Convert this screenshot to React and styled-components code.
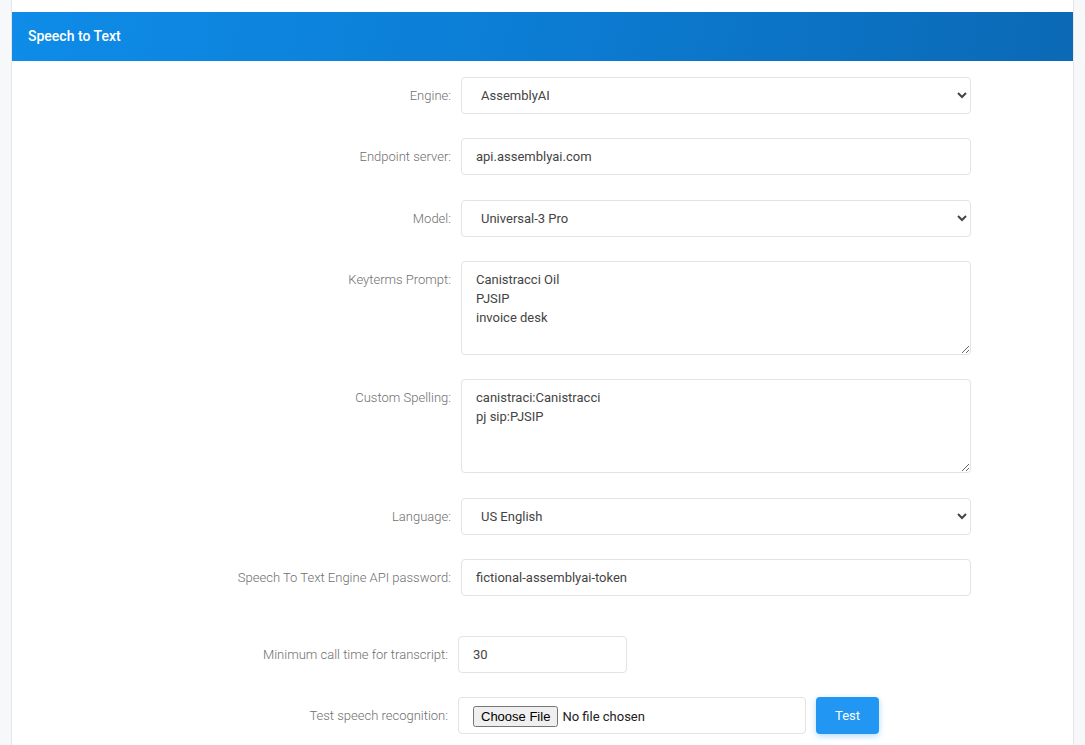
import React from "react";
import styled, { createGlobalStyle } from "styled-components";

const Global = createGlobalStyle`
  html, body { margin: 0; padding: 0; background: #f7f8fa; }
  body { font-family: Roboto, "Noto Sans", Arial, sans-serif; }
  * { box-sizing: border-box; }
`;

const Page = styled.div`
  padding: 0 11px 0 11px;
  min-height: 745px;
`;

const Card = styled.div`
  background: #fff;
  border-left: 1px solid #e6e7ea;
  border-right: 1px solid #e6e7ea;
  padding-top: 12px;
  min-height: 745px;
`;

const Header = styled.div`
  height: 49px;
  display: flex;
  align-items: center;
  padding: 0 16px 1px;
  background: linear-gradient(100deg, #0e8ce8 0%, #0c7ed6 45%, #0b69b5 100%);
  color: #fff;
  font-size: 14px;
  font-weight: 500;
`;

const Body = styled.div`
  padding-top: 16px;
  display: flex;
  flex-direction: column;
  gap: 24.33px;
`;

const Row = styled.div`
  display: flex;
  align-items: flex-start;
  gap: 10px;
  margin-top: ${(p) => (p.$extra ? "15.33px" : "0")};
`;

const Label = styled.label`
  width: ${(p) => p.$w || 439}px;
  flex: none;
  text-align: right;
  padding-top: 9px;
  line-height: 19px;
  font-size: 13px;
  font-weight: 300;
  color: #6f6f6f;
`;

const fieldBase = `
  border: 1px solid #e3e3e3;
  border-radius: 4px;
  background: #fff;
  font-family: Roboto, "Noto Sans", Arial, sans-serif;
  font-size: 13px;
  color: #444;
  outline: none;
`;

const Input = styled.input`
  ${fieldBase}
  width: ${(p) => p.$w || 510}px;
  height: 37px;
  padding: 0 14px;
`;

const Select = styled.select`
  ${fieldBase}
  width: 510px;
  height: 37px;
  padding: 0 10px 0 15px;
`;

const Area = styled.textarea`
  ${fieldBase}
  width: 510px;
  height: ${(p) => p.$h || 94}px;
  padding: 8px 14px;
  line-height: 19px;
  resize: vertical;
`;

const FileBox = styled.div`
  ${fieldBase}
  width: 348px;
  height: 37px;
  padding: 8px 14px 0;
  display: flex;
  align-items: flex-start;
  input { font-family: Roboto, "Noto Sans", Arial, sans-serif; font-size: 13px; color: #222; }
`;

const Button = styled.button`
  height: 37px;
  width: 63px;
  border: none;
  border-radius: 4px;
  background: #2196f3;
  color: #fff;
  font-family: Roboto, "Noto Sans", Arial, sans-serif;
  font-size: 13px;
  box-shadow: 0 2px 6px rgba(33, 150, 243, 0.35);
  cursor: pointer;
`;

export default function App() {
  return (
    <>
      <Global />
      <Page>
        <Card>
          <Header>Speech to Text</Header>
          <Body>
            <Row>
              <Label>Engine:</Label>
              <Select defaultValue="AssemblyAI">
                <option>AssemblyAI</option>
              </Select>
            </Row>
            <Row>
              <Label>Endpoint server:</Label>
              <Input defaultValue="api.assemblyai.com" />
            </Row>
            <Row>
              <Label>Model:</Label>
              <Select defaultValue="Universal-3 Pro">
                <option>Universal-3 Pro</option>
              </Select>
            </Row>
            <Row>
              <Label>Keyterms Prompt:</Label>
              <Area defaultValue={"Canistracci Oil\nPJSIP\ninvoice desk"} />
            </Row>
            <Row>
              <Label>Custom Spelling:</Label>
              <Area defaultValue={"canistraci:Canistracci\npj sip:PJSIP"} />
            </Row>
            <Row>
              <Label>Language:</Label>
              <Select defaultValue="US English">
                <option>US English</option>
              </Select>
            </Row>
            <Row>
              <Label>Speech To Text Engine API password:</Label>
              <Input defaultValue="fictional-assemblyai-token" />
            </Row>
            <Row $extra>
              <Label $w={436}>Minimum call time for transcript:</Label>
              <Input $w={169} defaultValue="30" />
            </Row>
            <Row>
              <Label $w={436}>Test speech recognition:</Label>
              <FileBox>
                <input type="file" />
              </FileBox>
              <Button>Test</Button>
            </Row>
          </Body>
        </Card>
      </Page>
    </>
  );
}
